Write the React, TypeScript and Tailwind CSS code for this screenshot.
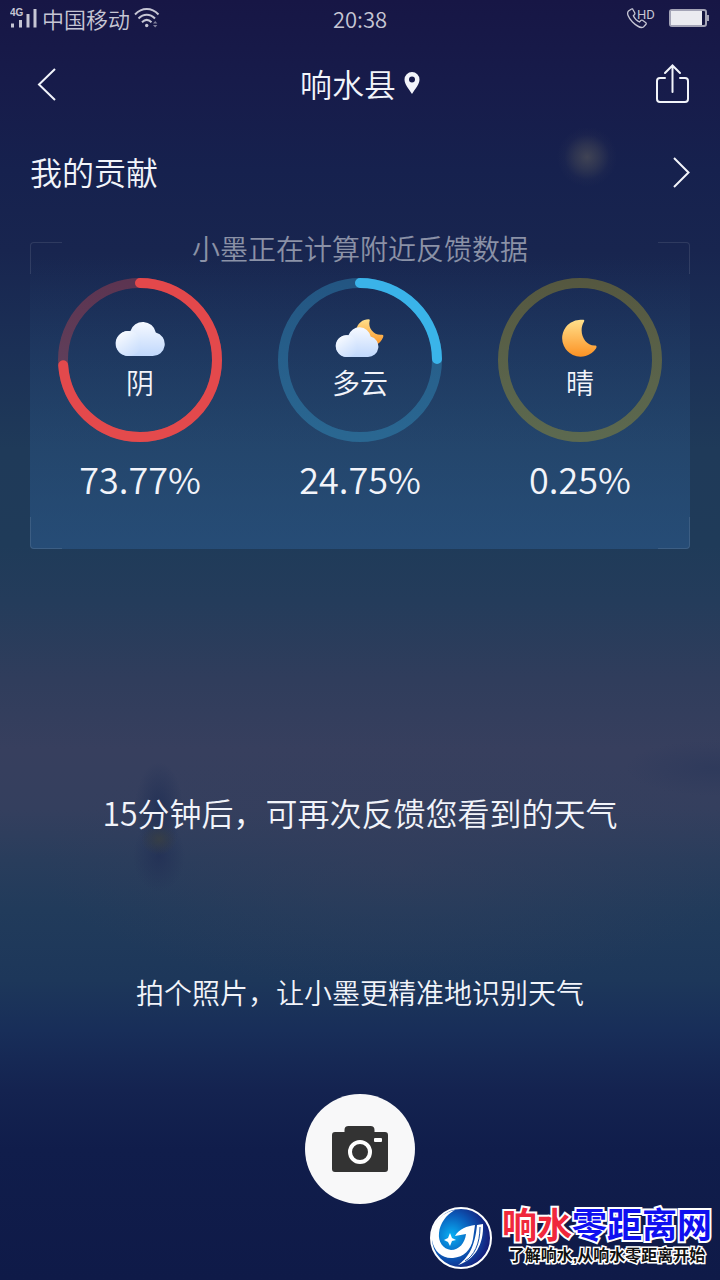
import React from "react";

type Kind = "cloud" | "cloudMoon" | "moon";

interface Reading {
  label: string;
  percent: string;
  share: number;
  color: string;
  track: string;
  kind: Kind;
}

const readings: Reading[] = [
  { label: "阴", percent: "73.77%", share: 0.7377, color: "#f24a4a", track: "#f14a4a", kind: "cloud" },
  { label: "多云", percent: "24.75%", share: 0.2475, color: "#3dbef4", track: "#3ab6ea", kind: "cloudMoon" },
  { label: "晴", percent: "0.25%", share: 0, color: "#f0c814", track: "#dcbc14", kind: "moon" },
];

function Gradients() {
  return (
    <svg width="0" height="0" className="absolute" aria-hidden="true">
      <defs>
        <linearGradient id="cloudBody" x1="0" y1="0" x2="0" y2="1">
          <stop offset="0" stopColor="#f6f9ff" />
          <stop offset="1" stopColor="#c0d8fc" />
        </linearGradient>
        <linearGradient id="cloudFront" x1="0" y1="0" x2="0.7" y2="1">
          <stop offset="0" stopColor="#ffffff" />
          <stop offset="1" stopColor="#c8ddfd" />
        </linearGradient>
        <linearGradient id="moonFill" x1="0" y1="0" x2="0" y2="1">
          <stop offset="0" stopColor="#ffe08c" />
          <stop offset="1" stopColor="#fc9224" />
        </linearGradient>
        <radialGradient id="globe" cx="0.34" cy="0.46" r="0.62">
          <stop offset="0" stopColor="#08b0f4" />
          <stop offset="0.55" stopColor="#0a5cba" />
          <stop offset="1" stopColor="#14207c" />
        </radialGradient>
      </defs>
    </svg>
  );
}

function CloudShape() {
  return (
    <g>
      <path
        d="M12.500 35A12.500 12.500 0 1 1 14.300 10.200A13.200 13.200 0 0 1 39.800 11.400A12 12 0 0 1 36.500 35Z"
        fill="url(#cloudBody)"
      />
      <path d="M12.500 35A12.500 12.500 0 1 1 25 22.500C25 29 20 35 12.500 35Z" fill="url(#cloudFront)" />
    </g>
  );
}

const MOON =
  "M22 0.800C23.400 0.800 23.600 1.800 22.800 3C17 13 23.500 26.500 33.500 26.600C35.800 26.600 36 27.600 35 29.500A18.500 18.500 0 1 1 22 0.800Z";

function WeatherIcon({ kind }: { kind: Kind }) {
  if (kind === "cloud")
    return (
      <svg width="50" height="40" viewBox="-1 -3 50 40" aria-hidden="true">
        <CloudShape />
      </svg>
    );
  if (kind === "cloudMoon")
    return (
      <svg width="50" height="40" viewBox="0 -1 50 40" aria-hidden="true">
        <path
          d="M21 12C22 4 28 0.200 33.500 0.200C35 0.200 35 1 34.500 2.500C33 9 39 16.500 46.500 15.800C48.500 15.600 48.800 16.600 48 18.500C46.500 22 44 24.500 40 27Z"
          fill="url(#moonFill)"
        />
        <g transform="translate(1 7.500) scale(0.87)">
          <CloudShape />
        </g>
      </svg>
    );
  return (
    <svg width="50" height="40" viewBox="-6 -1 50 40" aria-hidden="true">
      <path d={MOON} fill="url(#moonFill)" />
    </svg>
  );
}

function Ring({ item }: { item: Reading }) {
  const length = 2 * Math.PI * 77;
  return (
    <div className="relative grid size-[164px] place-items-center">
      <svg className="absolute inset-0" viewBox="0 0 164 164" aria-hidden="true">
        <circle cx="82" cy="82" r="77" fill="none" stroke={item.track} strokeOpacity="0.31" strokeWidth="10" />
        {item.share > 0 && (
          <circle
            cx="82"
            cy="82"
            r="77"
            fill="none"
            stroke={item.color}
            strokeOpacity="0.9"
            strokeWidth="10"
            strokeLinecap="round"
            strokeDasharray={`${length * item.share} ${length}`}
            transform="rotate(-90 82 82)"
          />
        )}
      </svg>
      <div className="flex flex-col items-center gap-2 pb-1">
        <WeatherIcon kind={item.kind} />
        <span className="text-[28px] leading-8">{item.label}</span>
      </div>
    </div>
  );
}

function StatusBar() {
  return (
    <div className="grid h-9 grid-cols-3 items-center px-[10px] text-[22px] leading-8 text-[#c6c6d4]">
      <div className="flex items-center gap-1">
        <svg width="28" height="20" viewBox="0 0 28 20" fill="currentColor" aria-label="4G">
          <path d="M1 15.500h3v4H1zM9 12h3v7.500H9zM16.500 6h3v13.500h-3zM23.500 1h3v18.500h-3z" />
          <text x="0" y="8" fontSize="10" fontWeight="700" fontFamily="Liberation Sans">4G</text>
        </svg>
        <span>中国移动</span>
        <svg width="26" height="22" viewBox="0 0 26 22" fill="none" stroke="currentColor" strokeWidth="2" aria-hidden="true">
          <path d="M1 7.500C8 .300 17.500 .300 24.500 7.500M4.500 11.500C9.500 6.500 16 6.500 21 11.500M8 15.200C11 12.300 14.500 12.300 17.500 15.200" />
          <circle cx="12.700" cy="18.500" r="1.700" fill="currentColor" stroke="none" />
          <path d="M19 16.500l2.200-2.500 2.200 2.500zM19 18l2.200 2.500 2.200-2.500z" fill="currentColor" stroke="none" opacity="0.6" />
        </svg>
      </div>
      <time className="text-center">20:38</time>
      <div className="flex items-center justify-end gap-3">
        <svg width="30" height="22" viewBox="0 0 30 22" fill="none" stroke="currentColor" strokeWidth="1.300" aria-label="HD">
          <path d="M5.500 2L2.500 4C.500 6 2 10.500 6.500 15C11 19.500 15.500 21.300 17.500 20L20 17.300C20.500 16.700 20.300 16 19.600 15.500L16.500 13.300C15.800 12.900 15.200 13 14.700 13.600L13.500 15C11 14 8.500 11.300 7.300 8.800L8.500 7.500C9 7 9 6.500 8.700 5.800L6.900 2.500C6.600 1.800 6 1.600 5.500 2Z" />
          <text x="11" y="12" fontSize="13" fontWeight="400" fill="currentColor" stroke="none" fontFamily="Roboto">HD</text>
        </svg>
        <svg width="42" height="20" viewBox="0 0 42 20" aria-hidden="true">
          <rect x="2" y="2" width="36" height="16" rx="2" fill="#15163f" stroke="#a4a4b6" strokeWidth="2" />
          <rect x="3" y="3" width="31" height="14" fill="#ebebf0" />
          <path d="M39 7h2v6h-2z" fill="#a4a4b6" />
        </svg>
      </div>
    </div>
  );
}

function Watermark() {
  return (
    <div className="absolute right-2 bottom-[10px] flex items-center gap-[10px]">
      <svg width="62" height="62" viewBox="0 0 62 62" aria-hidden="true">
        <circle cx="31" cy="31" r="30" fill="url(#globe)" stroke="#fff" strokeWidth="2" />
        <path
          d="M25 3C10 6 0 19 2 33C4 45 13 52 23 51C34 50 41 43 43 32L45 18C37 19 29 22 25 29L36 27C35 36 29 43 21 43C13 42 8 35 9 26C10 16 16 8 25 3Z"
          fill="#fff"
        />
        <path
          d="M47 18L53 17C54 37 45 53 28 58C38 51 45 40 47 18Z"
          fill="#fff"
        />
        <path d="M50 20C50 37 44 49 35 54" fill="none" stroke="#1450a8" strokeWidth="1" />
        <path d="M20 26L22 31L26 33L22 34L20 39L18 35L14 33L18 31Z" fill="#fff" />
      </svg>
      <div className="flex flex-col items-center pb-1 font-['Liberation_Sans','Noto_Sans_CJK_SC',sans-serif] font-bold">
        <span className="text-[35px] leading-10 [-webkit-text-stroke:4px_white] [paint-order:stroke_fill]">
          <span className="text-[#f0283c]">响水</span>
          <span className="text-[#1010f0]">零距离网</span>
        </span>
        <span className="text-[16px] leading-5 text-[#111] [-webkit-text-stroke:3px_white] [paint-order:stroke_fill]">
          了解响水,从响水零距离开始
        </span>
      </div>
    </div>
  );
}

const pageBackground =
  "bg-[radial-gradient(circle_30px_at_587px_157px,rgba(105,102,92,0.5),rgba(100,98,90,0.3)_40%,rgba(80,80,90,0.08)_75%,transparent),radial-gradient(ellipse_18px_16px_at_159px_839px,rgba(58,64,66,0.8),transparent),radial-gradient(ellipse_24px_46px_at_159px_808px,rgba(31,46,84,0.75),transparent),radial-gradient(ellipse_26px_36px_at_159px_856px,rgba(33,46,84,0.7),transparent),radial-gradient(ellipse_90px_28px_at_715px_768px,rgba(42,55,90,0.6),transparent),radial-gradient(ellipse_360px_130px_at_400px_860px,rgba(56,62,92,0.5),transparent),linear-gradient(to_bottom,#171645_0px,#171b4a_80px,#16214e_170px,#18254f_250px,#1b3056_350px,#1f3a59_450px,#1f3b59_545px,#243c5b_600px,#303d5c_680px,#373f5e_750px,#343f5e_810px,#293d5c_860px,#213b5b_910px,#1d375a_980px,#182e59_1030px,#142350_1090px,#101d4b_1150px,#0f1a48_1280px)]";

export default function App() {
  return (
    <main
      className={`relative min-h-screen overflow-hidden bg-[#0f1a48] font-['Noto_Sans_CJK_SC',sans-serif] font-[350] text-[#f2f4fa] ${pageBackground}`}
    >
      <Gradients />
      <StatusBar />

      <header className="grid h-[94px] grid-cols-[1fr_auto_1fr] items-center px-[30px] pt-1">
        <button type="button" aria-label="返回" className="justify-self-start">
          <svg width="32" height="40" viewBox="0 0 32 40" fill="none" stroke="currentColor" strokeWidth="2" aria-hidden="true">
            <path d="M25 4L9 19.500L25 35" />
          </svg>
        </button>
        <h1 className="flex items-center gap-2 pb-1 text-[32px] leading-10">
          响水县
          <svg width="16" height="24" viewBox="0 0 16 24" fill="currentColor" aria-hidden="true">
            <path
              fillRule="evenodd"
              d="M8 1A7.500 7.500 0 0 0 .500 8.500C.500 13.500 4.500 17.500 8 23C11.500 17.500 15.500 13.500 15.500 8.500A7.500 7.500 0 0 0 8 1ZM8 5.500A3 3 0 1 1 8 11.500A3 3 0 0 1 8 5.500Z"
            />
          </svg>
        </h1>
        <button type="button" aria-label="分享" className="justify-self-end">
          <svg width="36" height="42" viewBox="0 0 36 42" fill="none" stroke="currentColor" strokeWidth="2" strokeLinecap="round" aria-hidden="true">
            <path d="M11 14H6Q3 14 3 17V35Q3 38 6 38H31Q34 38 34 35V17Q34 14 31 14H26M18.500 28V2M11 9L18.500 1.500L26 9" />
          </svg>
        </button>
      </header>

      <a href="#contribution" className="flex h-[86px] items-center justify-between px-[30px] text-[32px] leading-10">
        <span className="pb-1">我的贡献</span>
        <svg width="20" height="32" viewBox="0 0 20 32" fill="none" stroke="currentColor" strokeWidth="2" aria-hidden="true">
          <path d="M4 1L18.500 15.500L4 30" />
        </svg>
      </a>

      <section className="relative mx-[30px] mt-[26px] flow-root rounded-b bg-linear-to-b from-transparent from-5% to-[#2b588a]/60 pb-[51px]">
        <span className="absolute top-0 left-0 size-8 rounded-tl border-t border-l border-white/10" />
        <span className="absolute top-0 right-0 size-8 rounded-tr border-t border-r border-white/10" />
        <span className="absolute bottom-0 left-0 size-8 rounded-bl border-b border-l border-white/10" />
        <span className="absolute right-0 bottom-0 size-8 rounded-br border-r border-b border-white/10" />
        <h2 className="-mt-2 text-center text-[28px] leading-7 text-white/50">小墨正在计算附近反馈数据</h2>
        <ul className="mt-4 grid grid-cols-3">
          {readings.map((item) => (
            <li key={item.label} className="flex flex-col items-center gap-4">
              <Ring item={item} />
              <span className="text-[36px] leading-10">{item.percent}</span>
            </li>
          ))}
        </ul>
      </section>

      <div className="flex flex-col items-center pb-[76px] text-center">
        <p className="mt-[247px] text-[32px] leading-8">15分钟后，可再次反馈您看到的天气</p>
        <p className="mt-[150px] text-[28px] leading-7">拍个照片，让小墨更精准地识别天气</p>
        <button
          type="button"
          aria-label="拍照"
          className="mt-[88px] grid size-[110px] place-items-center rounded-full bg-[#f8f8f9]"
        >
          <svg width="56" height="46" viewBox="0 0 56 46" aria-hidden="true">
            <path
              d="M3 6H12.500V4Q12.500 0 16.500 0H38.500Q42.500 0 42.500 4V6H53Q56 6 56 9V43Q56 46 53 46H3Q0 46 0 43V9Q0 6 3 6Z"
              fill="#333"
            />
            <circle cx="28" cy="26" r="10" fill="none" stroke="#fff" strokeWidth="4" />
            <rect x="42" y="12" width="8" height="4" rx="1" fill="#fff" />
          </svg>
        </button>
      </div>

      <Watermark />
    </main>
  );
}
